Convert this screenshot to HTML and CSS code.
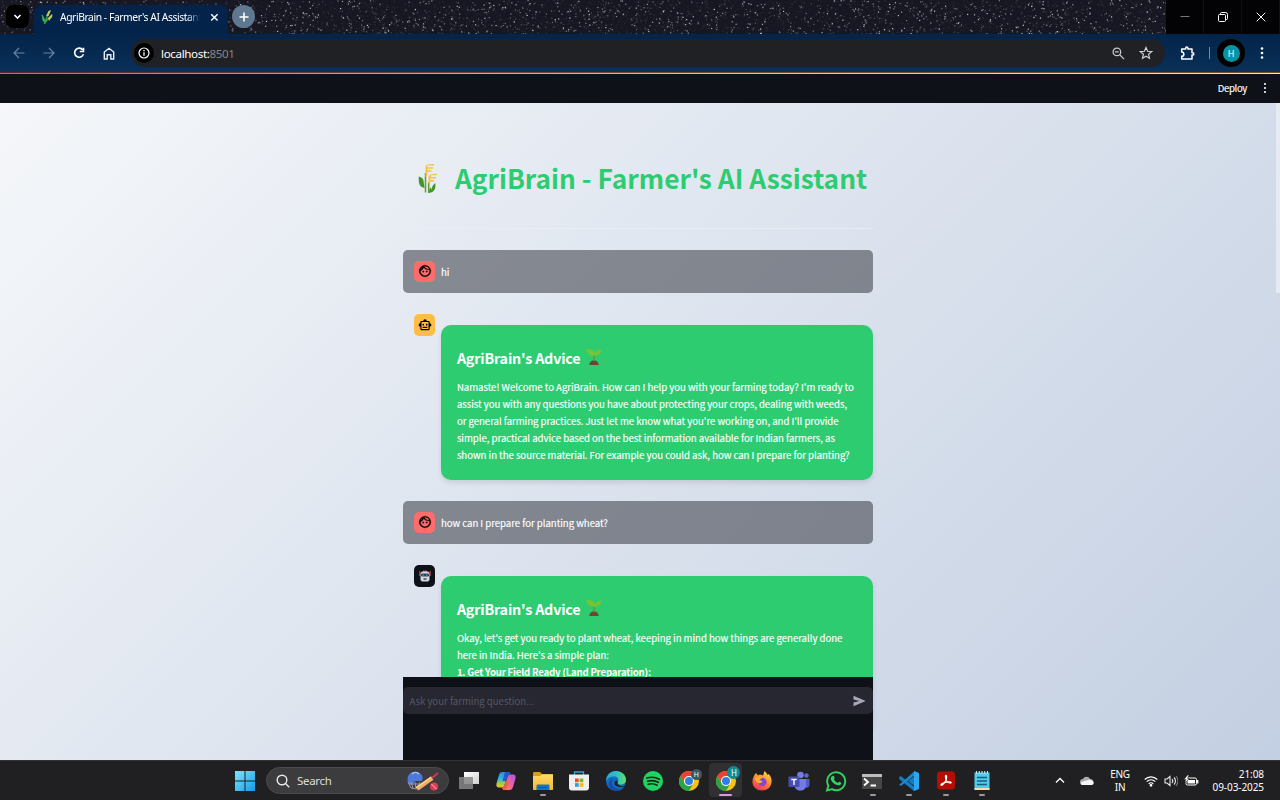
FILE: index.html
```html
<!DOCTYPE html>
<html lang="en">
<head>
<meta charset="utf-8">
<title>AgriBrain - Farmer's AI Assistant</title>
<link rel="stylesheet" href="styles.css">
</head>
<body>
<svg class="defs" aria-hidden="true">
  <defs>
    <linearGradient id="winG" x1="0" y1="0" x2="1" y2="1"><stop offset="0" stop-color="#7fe4fb"/><stop offset="1" stop-color="#129bea"/></linearGradient>
    <linearGradient id="copA" x1="0" y1="0" x2="0" y2="1"><stop offset="0" stop-color="#2a8df0"/><stop offset=".45" stop-color="#35b6d8"/><stop offset=".75" stop-color="#a5cf45"/><stop offset="1" stop-color="#f5c21f"/></linearGradient>
    <linearGradient id="copB" x1="1" y1="0" x2="0" y2="1"><stop offset="0" stop-color="#a05ae8"/><stop offset=".5" stop-color="#ec5fa4"/><stop offset="1" stop-color="#ff8a4a"/></linearGradient>
    <linearGradient id="foldG" x1="0" y1="0" x2="0" y2="1"><stop offset="0" stop-color="#ffd968"/><stop offset="1" stop-color="#f3b934"/></linearGradient>
    <linearGradient id="edgeG" x1="0" y1="0" x2="1" y2="0"><stop offset="0" stop-color="#2aa5e0"/><stop offset=".6" stop-color="#35c5b8"/><stop offset="1" stop-color="#66e05c"/></linearGradient>
    <linearGradient id="ffG" x1=".8" y1="0" x2=".3" y2="1"><stop offset="0" stop-color="#ffe04a"/><stop offset=".5" stop-color="#ff8a2a"/><stop offset="1" stop-color="#f0315c"/></linearGradient>
    <linearGradient id="grayG" x1="0" y1="0" x2="1" y2="1"><stop offset="0" stop-color="#fff"/><stop offset="1" stop-color="#cfcfcf"/></linearGradient>
    <symbol id="face" viewBox="0 0 24 24"><path d="M10.25 13a1.25 1.25 0 1 1-2.500 0 1.250 1.250 0 0 1 2.500 0zM15 11.750a1.250 1.250 0 1 0 0 2.500 1.250 1.250 0 0 0 0-2.500zM22 12a10 10 0 1 1-20 0 10 10 0 0 1 20 0zM10.660 4.120A9.950 9.950 0 0 0 17.500 9c.700 0 1.380-.090 2.030-.230A8 8 0 0 0 10.660 4.120zM4.420 9.470a8.050 8.050 0 0 0 3.660-4.440 8.040 8.040 0 0 0-3.660 4.440zM20 12c0-.780-.120-1.530-.330-2.240-.700.150-1.420.240-2.170.240a10 10 0 0 1-7.760-3.690A12 12 0 0 1 4 11.860V12a8 8 0 0 0 16 0z" stroke="currentColor" stroke-width=".7"/></symbol>
    <symbol id="sprout" viewBox="0 0 16 16"><path d="M3.200 16c.300-2.800 2.200-4.800 4.700-4.800s4.400 1.900 4.900 4.800z" fill="#6d4636"/><path d="M7.300 12V5.500h1.600V12z" fill="#5c9e31"/><path d="M8 6.600C6.500 6.300 4.800 6.500 3 5 1.500 3.700.8 1.700 0 .6 3-.3 7.900.300 8.400 3.200L9 4.200C10 1.800 13 .700 16 .8c-.900 1.400-1.200 3.300-2.600 4.300C11.700 6.200 9.900 5.900 8.800 6.900z" fill="#7cc42f"/></symbol>
    <symbol id="chrome" viewBox="0 0 22 22"><circle cx="11" cy="11" r="10" fill="#fbc116"/><path d="M2.340 6A10 10 0 0 1 19.660 6H11a5 5 0 0 0-4.330 7.500z" fill="#ea4335"/><path d="M2.340 6A10 10 0 0 0 11 21l4.330-7.500a5 5 0 0 1-8.660 0z" fill="#2ba24c"/><circle cx="11" cy="11" r="5" fill="#fff"/><circle cx="11" cy="11" r="4" fill="#2f7de9"/></symbol>
  </defs>
</svg>

<div class="desktop">
  <header class="tabstrip">
    <canvas class="stars" id="stars" width="1280" height="34"></canvas>
    <div class="tab-search"><svg width="9" height="9" viewBox="0 0 9 9"><path d="M1.500 3l3 3 3-3" fill="none" stroke="#fff" stroke-width="1.600"/></svg></div>
    <div class="tab">
      <svg width="12" height="15" viewBox="0 0 12 15"><path d="M1 5l3 6M3.500 14L6 7 9 1M5 12c1-3 3-4 6-5" fill="none" stroke="#3b9c50" stroke-width="1.500"/><path d="M5 6L7.500 1 10 0 7.500 6zM7 8l4-4 .5 2-3.500 5z" fill="#c9c94e"/><path d="M1 6c1 1 3 3 3.500 7C2 12 1 10 1 6z" fill="#41b25d"/></svg>
      <span class="tab-title">AgriBrain - Farmer's AI Assistant</span>
      <svg width="9" height="9" viewBox="0 0 9 9"><path d="M1.200 1.200l6.400 6.400M7.600 1.200L1.200 7.600" stroke="#fff" stroke-width="1.400"/></svg>
    </div>
    <div class="new-tab"><svg width="10" height="10" viewBox="0 0 10 10"><path d="M5 .500v9M.5 5h9" stroke="#fff" stroke-width="1.600"/></svg></div>
    <div class="window-controls">
      <span><svg width="10" height="10" viewBox="0 0 10 10"><path d="M.5 4.500h9" stroke="#777"/></svg></span>
      <span><svg width="10" height="10" viewBox="0 0 10 10" fill="none" stroke="#fff"><rect x=".5" y="2.500" width="7" height="7" rx="1"/><path d="M2.500 2V1.500a1 1 0 0 1 1-1h4a2 2 0 0 1 2 2v4a1 1 0 0 1-1 1H8"/></svg></span>
      <span><svg width="10" height="10" viewBox="0 0 10 10"><path d="M.7.700l8.600 8.600M9.300.700L.7 9.300" stroke="#fff"/></svg></span>
    </div>
  </header>

  <nav class="toolbar">
    <div class="nav-icons">
      <svg width="12" height="12" viewBox="0 0 12 12" fill="none" stroke="#6883a4" stroke-width="1.200"><path d="M11.500 6H1.200M6 1L1 6l5 5"/></svg>
      <svg width="12" height="12" viewBox="0 0 12 12" fill="none" stroke="#6883a4" stroke-width="1.200"><path d="M.5 6h10.300M6 1l5 5-5 5"/></svg>
      <svg width="12" height="12" viewBox="0 0 12 12" fill="none" stroke="#fff" stroke-width="1.600"><path d="M9.800 3A4.500 4.500 0 1 0 10.400 7.200"/><path d="M10.500.8v3.700H6.800"/></svg>
      <svg width="12" height="13" viewBox="0 0 12 13" fill="none" stroke="#e8eef6" stroke-width="1.400"><path d="M1.300 5L6 1.300 10.700 5v7H7.800V7.800H4.200V12H1.300z"/></svg>
    </div>
    <div class="omnibox">
      <span class="site-info"><svg width="12" height="12" viewBox="0 0 12 12"><circle cx="6" cy="6" r="5" fill="none" stroke="#fff" stroke-width="1.200"/><path d="M6 5.300v3.400M6 3v1.300" stroke="#fff" stroke-width="1.300"/></svg></span>
      <span class="url">localhost:<i>8501</i></span>
      <svg class="zoom" width="13" height="13" viewBox="0 0 13 13" fill="none" stroke="#c5c6c8" stroke-width="1.300"><circle cx="4.900" cy="4.900" r="3.800"/><path d="M7.700 7.700l4.400 4.400M3 4.900h3.800"/></svg>
      <svg width="14" height="14" viewBox="0 0 14 14" fill="none" stroke="#d0d1d3" stroke-width="1.200"><path d="M7 1.500l1.600 3.800 4.100.300-3.100 2.700.900 4L7 10.200l-3.500 2.100.900-4-3.100-2.700 4.100-.300z"/></svg>
    </div>
    <svg class="puzzle" width="15" height="15" viewBox="0 0 15 15"><path d="M1.700 3H5.700V2.200a1.100 1.100 0 0 1 2.200 0V3H12V6.800h.7a1.100 1.100 0 0 1 0 2.200H12V13H1.700V10.300a2.100 2.100 0 0 0 0-4.300z" fill="none" stroke="#fff" stroke-width="1.500" stroke-linejoin="round"/></svg>
    <span class="divider"></span>
    <span class="profile"><b>H</b></span>
    <svg class="kebab" width="4" height="14" viewBox="0 0 4 14" fill="#fff"><circle cx="2" cy="2.500" r="1.300"/><circle cx="2" cy="7" r="1.300"/><circle cx="2" cy="11.500" r="1.300"/></svg>
  </nav>

  <div class="decoration"></div>
  <div class="app-header"><span>Deploy</span><svg width="4" height="12" viewBox="0 0 4 12" fill="#fff"><circle cx="2" cy="2" r="1.050"/><circle cx="2" cy="6" r="1.050"/><circle cx="2" cy="10" r="1.050"/></svg></div>

  <main class="page">
    <div class="column">
      <h1 class="title">
        <svg width="20" height="31" viewBox="0 0 20 31"><path d="M7.500 10v19.500M10.700 19v11" stroke="#5c9e31" stroke-width="1.500"/><path d="M.8 13.500c3 1 4.700 2 4.800 5l1 6.500C2 24 .3 21.500.8 13.500zM17.300 20c.7 5.500-.8 9.500-6.300 9.800-.2-2 .3-4 2-5.500V27l1.800-4.500z" fill="#45942c"/><path d="M7.500 14V5c0-3 1-4 8.500-4v1.500h-6.500V4.300H15v1.500H9.500v1.500h4v1.500h-4v2.500L8.400 14zM10.500 21v-6c0-3 2-4.300 8.400-4.300v1.500h-6V14H18v1.500h-5.500V17H16v1.500h-3.500v1z" fill="#f5c24b"/></svg>
        <span>AgriBrain - Farmer's AI Assistant</span>
      </h1>
      <hr class="rule">
      <section class="message user">
        <span class="avatar red"><svg width="14" height="14"><use href="#face"/></svg></span><p>hi</p>
      </section>
      <section class="message bot">
        <span class="avatar orange"><svg width="14" height="14" viewBox="0 0 24 24"><path fill-rule="evenodd" d="M20 9V7c0-1.100-.900-2-2-2h-3a3 3 0 0 0-6 0H6c-1.100 0-2 .900-2 2v2a3 3 0 0 0 0 6v4c0 1.100.900 2 2 2h12c1.100 0 2-.900 2-2v-4a3 3 0 0 0 0-6zm-2 10H6V7h12zM9 13a1.500 1.500 0 1 1 0-3 1.500 1.500 0 0 1 0 3zm7.500-1.500a1.500 1.500 0 1 1-3 0 1.500 1.500 0 0 1 3 0zM8 15h8v2H8z"/></svg></span>
        <article class="card">
          <h3><span>AgriBrain's Advice</span><svg width="16" height="16"><use href="#sprout"/></svg></h3>
          <p>Namaste! Welcome to AgriBrain. How can I help you with your farming today? I'm ready to</p>
          <p>assist you with any questions you have about protecting your crops, dealing with weeds,</p>
          <p>or general farming practices. Just let me know what you're working on, and I'll provide</p>
          <p>simple, practical advice based on the best information available for Indian farmers, as</p>
          <p>shown in the source material. For example you could ask, how can I prepare for planting?</p>
        </article>
      </section>
      <section class="message user">
        <span class="avatar red"><svg width="14" height="14"><use href="#face"/></svg></span><p>how can I prepare for planting wheat?</p>
      </section>
      <section class="message bot">
        <span class="avatar dark"><svg width="12" height="12" viewBox="0 0 12 12"><path d="M.8 1v5M11.200 1v5" stroke="#e04358" stroke-width="1"/><path d="M3 1.500h6L10.500 3v7l-1.500 1.500H3L1.500 10V3z" fill="#d5d9e4"/><path d="M4 .800h4v1H4z" fill="#e8a07a"/><rect x="2" y="3.500" width="8" height="3" rx="1.300" fill="#25465f"/><path d="M3.500 5h1.500M7 5h1.500" stroke="#53a7d8"/><path d="M4.500 9h3" stroke="#333" stroke-width="1.300"/></svg></span>
        <article class="card">
          <h3><span>AgriBrain's Advice</span><svg width="16" height="16"><use href="#sprout"/></svg></h3>
          <p>Okay, let's get you ready to plant wheat, keeping in mind how things are generally done</p>
          <p>here in India. Here's a simple plan:</p>
          <p><b>1. Get Your Field Ready (Land Preparation):</b></p>
        </article>
      </section>
    </div>
    <div class="chat-bar">
      <div class="chat-input"><span>Ask your farming question...</span><svg width="13" height="12" viewBox="0 0 13 12"><path d="M.5.700L12.700 6 .5 11.300V7.500L6.500 6 .5 4.500z" fill="#a6a8b5"/></svg></div>
    </div>
    <span class="scrollbar"></span>
  </main>

  <footer class="taskbar">
    <svg class="start" width="20" height="20" viewBox="0 0 20 20" fill="url(#winG)"><path d="M0 0h9.500v9.500H0zM10.500 0H20v9.500h-9.500zM0 10.500h9.500V20H0zM10.500 10.500H20V20h-9.500z"/></svg>
    <div class="search">
      <svg width="14" height="14" viewBox="0 0 14 14" fill="none" stroke="#e8e8e8" stroke-width="1.400"><circle cx="6" cy="6" r="4.800"/><path d="M9.500 9.500l3.700 3.700"/></svg>
      <span>Search</span>
      <svg width="34" height="22" viewBox="0 0 34 22"><path d="M2 13C0 5 5 1 10 2c5 .500 8 4 6 9L9 11l-3 4z" fill="#4d79dc"/><path d="M6 4c2-2 5-2 7 0" stroke="#a9c3ff" stroke-width="1.500" fill="none"/><path d="M2 12l3 6 6 1 3-7M3 14h10M5 12l2 6M9 12l1 6" stroke="#989aaa" stroke-width="1" fill="none"/><path d="M9.500 17L25 6.500l2.500 3.300L12.500 20.500z" fill="#edaf67"/><path d="M10 17L25 6.500l.8 1L11 18z" fill="#ffd394"/><path d="M26 8l6-5" stroke="#c43c58" stroke-width="2"/><circle cx="28" cy="16.500" r="4" fill="#d93e55"/><path d="M25.500 14l5 5" stroke="#ffc4c7"/></svg>
    </div>
    <div class="apps">
      <span><svg width="22" height="22" viewBox="0 0 22 22"><path d="M6 2h15v12H6z" fill="url(#grayG)"/><path d="M1 7h14v12H1z" fill="#868686" opacity=".85"/></svg></span>
      <span><svg width="22" height="22" viewBox="0 0 22 22"><path d="M7.500 2h6L9.500 15c-.5 1.700-1.300 2.500-3 2.500H4c-2.500 0-3-2-2.500-4L4 5c.6-2 1.500-3 3.500-3z" fill="url(#copA)"/><path d="M14.500 20h-6l4-13c.5-1.700 1.300-2.500 3-2.500H18c2.500 0 3 2 2.500 4L18 17c-.6 2-1.500 3-3.500 3z" fill="url(#copB)"/><path d="M10 2h3.500c1.500 0 2 1 2.300 2.500-2 0-3 .5-3.500 2.500L11 11H7.500z" fill="#2358ce"/><path d="M6.500 17.500c2 0 2.600-.800 3-2.500l1.200-4H14l-2.500 8c-1 1.500-3.500 1.300-4.200-.200z" fill="#ed6248"/></svg></span>
      <span class="open"><svg width="22" height="22" viewBox="0 0 22 22"><path d="M1 3.500c0-1 .5-1.500 1.500-1.500h5.500l2 2H20c.7 0 1 .5 1 1v14H1z" fill="#d69a25"/><path d="M1 6h7l2-1.500h11V19c0 .7-.3 1-1 1H2c-.7 0-1-.3-1-1z" fill="url(#foldG)"/><path d="M4.500 20v-4c0-1 .5-1.500 1.500-1.500h10c1 0 1.500.5 1.500 1.500v4z" fill="#1774bd"/><path d="M7 17.500h8" stroke="#105895"/></svg></span>
      <span><svg width="22" height="22" viewBox="0 0 22 22"><path d="M6.500 6V2h9v4" fill="none" stroke="#35a4de" stroke-width="1.300"/><path d="M1 4.500h20v13c0 2-1 3-3 3H4c-2 0-3-1-3-3z" fill="#efefef"/><path d="M7 8.500h3.700v3.700H7z" fill="#ea5129"/><path d="M11.600 8.500h3.700v3.700h-3.700z" fill="#7fb927"/><path d="M7 13.100h3.700v3.700H7z" fill="#26a1e8"/><path d="M11.600 13.100h3.700v3.700h-3.700z" fill="#fbb818"/></svg></span>
      <span><svg width="22" height="22" viewBox="0 0 22 22"><circle cx="11" cy="11" r="10" fill="#126cc1"/><path d="M1 11C1 5 5.500 1 11 1s10 4 10 8.500c0 3.500-2.500 5-5 5s-4-1-3-3c1.300-3-1-5-4-5-4 0-7 2-8 4.500z" fill="url(#edgeG)"/><path d="M8 9c-3 5 1 10 7 10 2 0 3.500-.700 4-1.200C15 23 7 21.500 4.500 17 2.500 13 5 9 8 9z" fill="#164f98"/><path d="M12.800 11c-1.400 2.500.5 5 4.200 5 1.500 0 3-.500 3.500-1.500-.5 1-1 1.700-2 2.200-5 1.300-9.500-1-9-4 .3-2 2-3 3.300-1.700z" fill="#202022"/></svg></span>
      <span><svg width="22" height="22" viewBox="0 0 22 22"><circle cx="11" cy="11" r="10" fill="#20d461"/><path d="M4.800 8c4.500-1.300 9-.800 12.600 1.200M5.600 11.200c3.800-1 7.600-.600 10.700 1.100M6.200 14.200c3.200-.800 6.200-.500 8.900 1" fill="none" stroke="#17271d" stroke-width="1.700" stroke-linecap="round"/></svg></span>
      <span><svg width="22" height="22"><use href="#chrome"/></svg><i class="badge">H</i></span>
      <span class="active"><svg width="22" height="22"><use href="#chrome"/></svg><i class="badge teal">H</i></span>
      <span><svg width="22" height="22" viewBox="0 0 22 22"><path d="M3.500 5l1.500-2 2 2.500L9 4.500l3 1L13.500 1c1.500 1 2.500 3 3 4l1-1c2.500 2.500 3.500 5 3 8.500C20 17.500 16 20.500 11 20.500S1.500 17.500 1.500 12c0-2.500.5-4.500 2-7z" fill="url(#ffG)"/><circle cx="11.300" cy="12" r="4.300" fill="#8147d7"/><path d="M4 7.500c2-2 5-1 7 1-1.500.3-2.500 1-2.500 2 1.500-.2 2.500.2 3 1-1 1.500-3 2-4.500 1.500C5 12 4 10 4 7.500z" fill="#ffae30"/></svg></span>
      <span><svg width="22" height="22" viewBox="0 0 22 22"><circle cx="12.500" cy="5" r="3.300" fill="#757de4"/><circle cx="18.500" cy="5.500" r="2.200" fill="#5e67ca"/><path d="M15 9h6.500v5.500c0 2-1.500 3.500-4 3.500z" fill="#535bc2"/><path d="M6.500 9H18v6c0 3.500-2 5.500-5.500 5.500s-6-2-6-5.500z" fill="#737be5"/><rect x=".5" y="6.500" width="11" height="10.500" rx="1" fill="#454eb8"/><path d="M3.300 9.500h5.400M6 9.500V15" stroke="#fff" stroke-width="1.400"/></svg></span>
      <span><svg width="22" height="22" viewBox="0 0 22 22"><path d="M2 20.500l1.400-4.800A9 9 0 1 1 7 19.200z" fill="none" stroke="#2fd665" stroke-width="1.900"/><path d="M7.500 6c1-.5 1.500 0 2 1.700.3.800-.7 1.300-.5 1.800 1 1.700 2 2.600 3.700 3.300.6 0 1-1.300 1.600-1.100 2 .8 2.200 1 1.800 2-.8 2-3.300 2-6 .6-2.300-1.200-4.800-4.300-4.300-6.300.3-1 .8-1.600 1.700-2z" fill="#2fd665"/></svg></span>
      <span class="open"><svg width="22" height="22" viewBox="0 0 22 22"><path d="M1 4h20v15H1z" fill="#464646"/><path d="M1 4h20v3H1z" fill="#bcbcbc"/><path d="M3 8.500l4 3.500-4 3.500M9.500 15.500H15" stroke="#fff" stroke-width="1.800" fill="none"/></svg></span>
      <span class="open"><svg width="22" height="22" viewBox="0 0 22 22"><path fill-rule="evenodd" d="M1.200 7.200l1.600-1.300 13.700 11v3.600l-.8.300L1 9zM16 6.800L9.800 11l6.200 4.600z" fill="#177bbf"/><path d="M1.200 14.800l1.600 1.300L16.500 5.500V1.200z" fill="#1b87cf"/><path d="M16 1l5 2v16l-5 2z" fill="#2ba6f3"/></svg></span>
      <span class="open"><svg width="22" height="22" viewBox="0 0 22 22"><rect x="2" y="1.500" width="18" height="18" rx="3" fill="#b30d05"/><path d="M6.300 15.300c-1.500-1 3-3 7.200-3.500 3.500-.3 3.500 2 .5 1-2.500-1-4-4-3.500-6.800.5-1.500 1.500 0 1 2.500-.8 3-3.700 7.300-5.200 6.800z" fill="none" stroke="#fff" stroke-width="1.200"/></svg></span>
      <span class="open"><svg width="22" height="22" viewBox="0 0 22 22"><path d="M3.500 2.500h15v17h-15z" fill="#55c9e9"/><path d="M3.500 18h15v2h-15z" fill="#f0e1b5"/><path d="M6 7.500h10M6 11h10M6 14.500h10" stroke="#155f7f" stroke-width="1.400"/><path d="M5.500 1v3M8.300 1v3M11 1v3M13.700 1v3M16.500 1v3" stroke="#b7ebf7" stroke-width="1.100"/></svg></span>
    </div>
    <div class="tray">
      <svg class="up" width="10" height="7" viewBox="0 0 10 7"><path d="M1 5.500l4-4 4 4" fill="none" stroke="#fff" stroke-width="1.300"/></svg>
      <svg class="cloud" width="14" height="9" viewBox="0 0 14 9"><path d="M3 9a3 3 0 0 1 0-6C4 0 9 0 10 3a3 3 0 0 1 1 6z" fill="#aaa"/><path d="M2 9c-2-1-1-3 1-3.500L8 4c2-.500 5 .500 5.500 2.500.3 1.500-.5 2.500-2 2.500z" fill="#f5f5f5"/></svg>
      <span class="lang">ENG<br>IN</span>
      <svg class="wifi" width="14" height="12" viewBox="0 0 14 12" fill="none" stroke="#fff" stroke-width="1.200"><path d="M.7 4.500c3.600-3.600 9-3.600 12.600 0M2.700 6.700c2.500-2.500 6.100-2.500 8.600 0M4.700 8.800c1.400-1.400 3.200-1.400 4.600 0"/><circle cx="7" cy="10.300" r=".8" fill="#fff"/></svg>
      <svg class="vol" width="14" height="12" viewBox="0 0 14 12" fill="none" stroke="#e8e8e8" stroke-width="1.100"><path d="M1 4h2l3-2.500v9L3 8H1zM8 4c1 1.200 1 2.800 0 4M10 2.500c2 2 2 5 0 7"/><path d="M12 1c2.300 3 2.300 7 0 10" stroke="#777"/></svg>
      <svg class="batt" width="15" height="12" viewBox="0 0 15 12"><rect x="2" y="3" width="10.500" height="7" rx="1.500" fill="none" stroke="#fff"/><path d="M3.500 5h7.500v3.500H3.500z" fill="#fff"/><path d="M13.700 5v3.500" stroke="#fff" stroke-width="1.300"/><path d="M3.500 0L0 4.500h2L.8 8.500 5.200 3.400H3.400L5 0z" fill="#fff" stroke="#202022" stroke-width=".5"/></svg>
      <span class="clock">21:08<br>09-03-2025</span>
    </div>
  </footer>
</div>
<script src="stars.js"></script>
</body>
</html>
```
FILE: styles.css
```css
* { box-sizing: border-box; }
body { margin: 0; width: 1280px; height: 800px; overflow: hidden; font-family: "Noto Sans", sans-serif; }
h1, h3, p { margin: 0; }
i { font-style: normal; }
svg { display: block; flex: none; }
.defs { position: absolute; width: 0; height: 0; }
.desktop { height: 800px; display: flex; flex-direction: column; }

/* Browser tab strip */
.tabstrip { position: relative; height: 34px; flex: none; display: flex; align-items: flex-start; background: #161722; }
.stars { position: absolute; inset: 0; }
.tabstrip > div { position: relative; }
.tab-search { width: 23px; height: 23px; margin: 5px 0 0 6px; border-radius: 7px; background: #000; display: grid; place-items: center; }
.tab { width: 194px; height: 29px; margin: 5px 0 0 5px; padding: 0 9px 5px 7px; border-radius: 7px 7px 0 0; background: #03234a; display: flex; align-items: center; color: #fff; font-size: 10.300px; }
.tab-title { width: 140px; margin: 0 10px 0 7px; white-space: nowrap; overflow: hidden; letter-spacing: -0.420px; -webkit-mask-image: linear-gradient(90deg, #000 91%, transparent); mask-image: linear-gradient(90deg, #000 91%, transparent); }
.new-tab { width: 23px; height: 23px; margin: 5px 0 0 4px; border-radius: 50%; background: #5e7890; display: grid; place-items: center; }
.window-controls { margin-left: auto; width: 114px; height: 34px; display: flex; background: #030305; }
.window-controls span { width: 38px; display: grid; place-items: center; border-right: 1px solid #111115; }

/* Browser toolbar */
.toolbar { height: 38px; flex: none; display: flex; align-items: center; background: linear-gradient(#03234a, #0a3158); }
.nav-icons { display: flex; gap: 18px; padding-left: 13px; width: 131px; align-items: center; }
.omnibox { width: 1034px; height: 28px; border-radius: 14px; background: #202124; display: flex; align-items: center; padding: 0 12px 0 3px; }
.site-info { width: 20px; height: 20px; border-radius: 50%; background: #000; display: grid; place-items: center; }
.url { margin-left: 7px; color: #fff; font-size: 11.600px; letter-spacing: -0.360px; }
.url i { color: #85878b; }
.zoom { margin-left: auto; margin-right: 14px; }
.puzzle { margin-left: 15px; }
.divider { width: 1px; height: 12px; margin: 0 8px 0 14px; background: #6f8aa5; }
.profile { width: 28px; height: 28px; border-radius: 50%; background: #000; display: grid; place-items: center; margin-left: -1px; }
.profile b { width: 17px; height: 17px; border-radius: 50%; background: #0794a5; color: #fff; font: 9px/17px "Noto Sans", sans-serif; text-align: center; }
.kebab { margin-left: 15px; }

/* App header */
.decoration { height: 2px; flex: none; background: linear-gradient(90deg, #d9605a, #f08a5c 25%, #fcb970 55%, #ffec8c) 0 1px / 100% 1px no-repeat, linear-gradient(90deg, #5e2733, #7b4632 40%, #705424); }
.app-header { height: 29px; flex: none; display: flex; align-items: center; justify-content: flex-end; gap: 16px; padding: 0 13px 1px 0; background: #0e1117; color: #fff; font: 9.600px "Noto Sans CJK SC", sans-serif; letter-spacing: -0.350px; -webkit-text-stroke: .15px; }

/* Chat page */
.page { position: relative; flex: 1; min-height: 0; overflow: hidden; background: linear-gradient(135deg, #f5f7fa, #c3cfe2); color: #fff; font-family: "Noto Sans CJK SC", sans-serif; }
.column { width: 469.500px; margin-left: 403.400px; }
.title { height: 125px; padding: 59px 0 0 15px; display: flex; color: #2ecc71; font-size: 26.300px; font-weight: 700; line-height: 31px; white-space: nowrap; }
.title svg { margin: 1px 16.500px 0 0; }
.rule { height: 1px; margin: 0; border: 0; background: #e9edf5; }
.message { display: flex; width: 100%; font-size: 9.600px; line-height: 17px; letter-spacing: -0.024px; }
.user { height: 43px; margin-top: 21px; padding: 10.500px; border-radius: 5px; background: rgba(38, 39, 48, .5); }
.user p { line-height: 22px; margin-left: 5.500px; }
.user p, .card p { -webkit-text-stroke: .15px; }
.bot { padding-left: 10.500px; margin-top: 21px; }
.avatar { width: 21.500px; height: 21.500px; flex: none; border-radius: 5px; display: grid; place-items: center; color: #1c0d10; }
.red { background: #ff6c6c; }
.orange { background: #ffbd45; }
.dark { background: #0e1117; }
.card { width: 432px; margin: 11px 0 0 5.500px; height: 155px; padding: 22px 16px 0; border-radius: 10px; background: #2ecc71; box-shadow: 0 3px 5px rgba(0, 0, 0, .1); }
.card h3 { display: flex; align-items: center; gap: 6px; height: 20px; margin-bottom: 11.600px; font-size: 14.300px; font-weight: 700; letter-spacing: -0.180px; }
.card p { white-space: nowrap; height: 17.050px; }
.card p b { letter-spacing: -0.190px; -webkit-text-stroke: 0; }

/* Chat input */
.chat-bar { position: absolute; left: 403.400px; bottom: 0; width: 469.500px; height: 83px; padding-top: 10px; background: #0e1117; }
.chat-input { height: 27px; border-radius: 5px; background: #262730; display: flex; align-items: center; justify-content: space-between; padding: 0 7px 0 6px; color: #555765; font-size: 9.600px; }
.scrollbar { position: absolute; right: 0; top: 0; width: 4px; height: 190px; background: #e6eaf2; }

/* Windows taskbar */
.taskbar { height: 40px; flex: none; display: flex; align-items: center; background: #202022; border-top: 1px solid #303238; color: #fff; }
.start { margin-left: 235px; }
.search { width: 183px; height: 27px; margin-left: 11px; border-radius: 14px; border: 1px solid #4b4a4c; background: #3c3b3e; display: flex; align-items: center; padding: 0 8px 0 9px; font-size: 11.500px; letter-spacing: -0.300px; color: #ddd; }
.search span { margin: 0 auto 0 7px; }
.apps { display: flex; height: 39px; margin-left: 2px; }
.apps span { position: relative; width: 36.650px; display: grid; place-items: center; }
.open::after, .active::after { content: ""; position: absolute; bottom: 4px; left: 15.500px; width: 6px; height: 2px; border-radius: 1px; background: #999; }
.active::before { content: ""; position: absolute; inset: 2px 2px 3px; border-radius: 4px; background: #303033; }
.active svg { position: relative; }
.active::after { left: 12px; width: 13px; background: #d997df; }
.badge { position: absolute; left: 20px; top: 8px; width: 11px; height: 11px; border-radius: 50%; background: #3d5665; color: #fff; font-size: 7px; line-height: 11px; text-align: center; }
.teal { top: 5px; width: 13px; height: 13px; line-height: 13px; background: #068d99; font-size: 8px; }
.tray { margin-left: auto; margin-right: 16px; display: flex; align-items: center; font-size: 10px; line-height: 13px; letter-spacing: -0.080px; white-space: nowrap; }
.cloud { margin-left: 15px; }
.lang { width: 22px; margin-left: 15px; text-align: center; letter-spacing: -0.300px; }
.wifi { margin-left: 13px; }
.vol { margin-left: 6px; }
.batt { margin-left: 6px; }
.clock { width: 65px; text-align: right; }
```
FILE: stars.js
```javascript
// Seeded night sky behind the tab strip
const ctx = document.getElementById('stars').getContext('2d');
let seed = 73;
const rnd = () => (seed = (seed * 16807) % 2147483647) / 2147483647;
for (let i = 0; i < 6500; i++) {
  const v = rnd();
  const c = Math.round(32 + 215 * v ** 6);
  ctx.fillStyle = `rgba(${c},${c},${c + 6},.85)`;
  ctx.fillRect(rnd() * 1280, rnd() * 34, 1.2, 1.2);
}
```
